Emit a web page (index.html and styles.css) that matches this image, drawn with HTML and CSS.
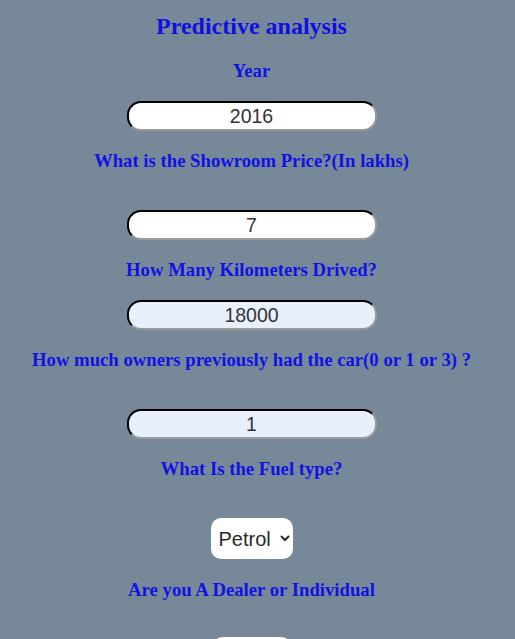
FILE: index.html
```html
<!DOCTYPE html>
<html>
<head>
<meta charset="utf-8">
<link rel="stylesheet" href="styles.css">
</head>
<body>
<form class="form">
  <h1 class="title">Predictive analysis</h1>
  <label class="q">Year</label>
  <input class="field" type="text" value="2016">
  <label class="q q-wide">What is the Showroom Price?(In lakhs)</label>
  <input class="field" type="text" value="7">
  <label class="q">How Many Kilometers Drived?</label>
  <input class="field field-fill" type="text" value="18000">
  <label class="q q-wide">How much owners previously had the car(0 or 1 or 3) ?</label>
  <input class="field field-fill" type="text" value="1">
  <label class="q q-wide">What Is the Fuel type?</label>
  <select class="pick">
    <option>Petrol</option>
    <option>Diesel</option>
    <option>CNG</option>
  </select>
  <label class="q q-wide q-last">Are you A Dealer or Individual</label>
  <select class="pick pick-2">
    <option>Dealer</option>
    <option>Individual</option>
  </select>
</form>
</body>
</html>
```

FILE: styles.css
```css
html, body {
  margin: 0;
  padding: 0;
}
body {
  background: #778899;
  font-family: "Liberation Serif", "Times New Roman", serif;
  color: #0000ff;
  height: 639px;
  overflow: hidden;
}
.form {
  display: flex;
  flex-direction: column;
  align-items: center;
  padding-top: 12px;
  padding-right: 12px;
}
.title {
  margin: 0;
  font-size: 24px;
  line-height: 28px;
  font-weight: bold;
  color: #1010e0;
}
.q {
  display: block;
  font-size: 18.72px;
  line-height: 22px;
  font-weight: bold;
  color: #1212e2;
  margin-top: 19px;
  margin-bottom: 19px;
}
.title + .q {
  margin-top: 20px;
}
.q-wide {
  margin-bottom: 38px;
}
.q-last {
  margin-top: 20px;
  margin-bottom: 36px;
}
.field {
  box-sizing: border-box;
  width: 250px;
  height: 30px;
  border-radius: 14px;
  border: 2px inset;
  border-top-color: #2a2a2a;
  border-left-color: #2a2a2a;
  border-right-color: #9a9a9a;
  border-bottom-color: #9a9a9a;
  background: #ffffff;
  font-family: "Liberation Sans", Arial, sans-serif;
  font-size: 19.5px;
  color: #333333;
  text-align: center;
  padding: 0 8px;
  margin: 0;
}
.field-fill {
  background: #e8f0fe;
}
.pick {
  box-sizing: border-box;
  height: 41px;
  width: 82px;
  border: none;
  border-radius: 10px;
  background: #ffffff;
  font-family: "Liberation Sans", Arial, sans-serif;
  font-size: 20px;
  color: #2a2a2a;
  padding: 0 4px;
  margin: 0;
}
.pick-2 {
  width: 78px;
}
```
